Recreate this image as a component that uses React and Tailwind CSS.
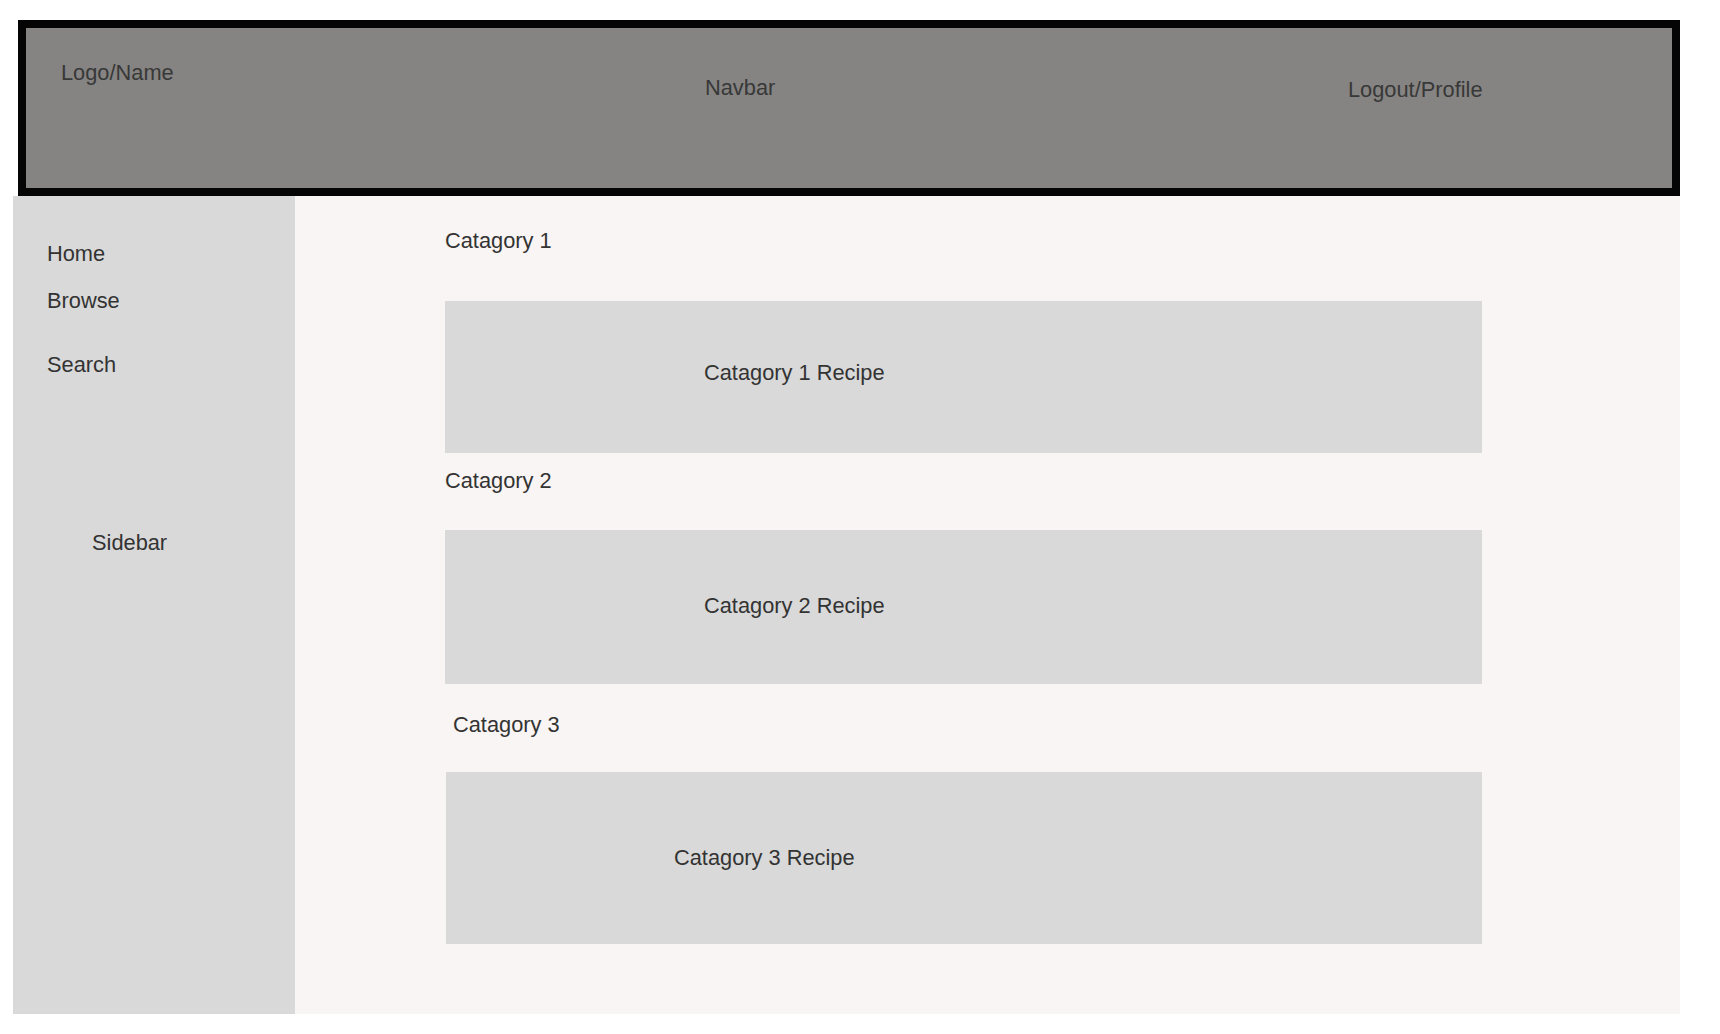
import React from 'react';

const font = { fontFamily: '"Liberation Sans", Arial, sans-serif' };

const sections = [
  { title: 'Catagory 1', recipe: 'Catagory 1 Recipe', titleCls: 'mt-[33px] ml-0', cardCls: 'mt-[48px] ml-0 w-[1037px] h-[152px] pt-[60px] pl-[259px]' },
  { title: 'Catagory 2', recipe: 'Catagory 2 Recipe', titleCls: 'mt-[16px] ml-0', cardCls: 'mt-[37px] ml-0 w-[1037px] h-[154px] pt-[64px] pl-[259px]' },
  { title: 'Catagory 3', recipe: 'Catagory 3 Recipe', titleCls: 'mt-[29px] ml-[8px]', cardCls: 'mt-[35px] ml-[1px] w-[1036px] h-[172px] pt-[74px] pl-[228px]' },
];

const Header = () => (
  <header className="ml-[18px] mr-[40px] mt-[20px] h-[176px] border-[8px] border-[#050505] bg-[#858482] text-[#383838] flex items-start pl-[35px]">
    <div className="w-[644px] mt-[33px]">Logo/Name</div>
    <div className="w-[643px] mt-[48px]">Navbar</div>
    <div className="mt-[50px]">Logout/Profile</div>
  </header>
);

const Sidebar = () => (
  <aside className="w-[282px] shrink-0 bg-[#d9d9d9] pl-[34px] pt-[46px] flex flex-col">
    <a className="block">Home</a>
    <a className="block mt-[23px]">Browse</a>
    <a className="block mt-[40px]">Search</a>
    <div className="mt-[154px] ml-[45px]">Sidebar</div>
  </aside>
);

export default function App() {
  return (
    <div className="w-[1720px] h-[1034px] bg-white text-[21.8px] leading-[24px] text-[#333333]" style={font}>
      <Header />
      <div className="flex ml-[13px] mr-[40px] h-[818px]">
        <Sidebar />
        <main className="flex-1 bg-[#f9f5f4] pl-[150px] flex flex-col items-start">
          {sections.map((s) => (
            <React.Fragment key={s.title}>
              <h2 className={s.titleCls}>{s.title}</h2>
              <div className={`bg-[#d9d9d9] ${s.cardCls}`}>{s.recipe}</div>
            </React.Fragment>
          ))}
        </main>
      </div>
    </div>
  );
}
